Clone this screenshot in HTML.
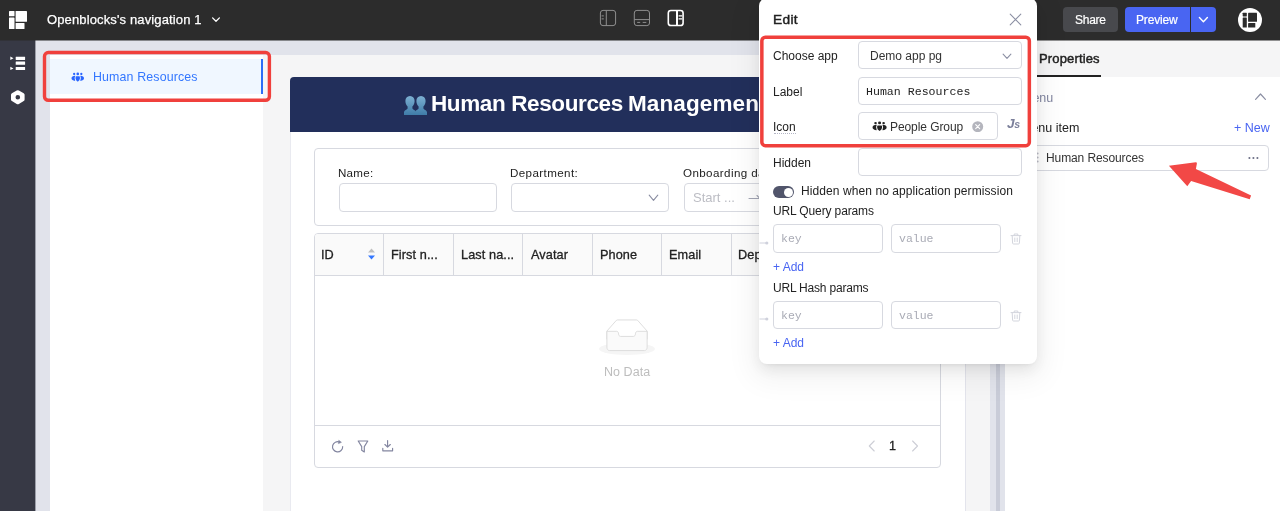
<!DOCTYPE html>
<html>
<head>
<meta charset="utf-8">
<title>Openblocks navigation</title>
<style>
*{box-sizing:border-box;margin:0;padding:0}
html,body{width:1280px;height:511px;overflow:hidden;background:#e1e3eb;font-family:"Liberation Sans",sans-serif;color:#333}
.abs{position:absolute}
.t{position:absolute;white-space:nowrap;line-height:1;will-change:transform}
#topbar{position:absolute;left:0;top:0;width:1280px;height:40px;background:#2c2c2c}
#sidebar{position:absolute;left:0;top:40px;width:35px;height:471px;background:#373945}
#navpanel{position:absolute;left:50px;top:55px;width:213px;height:456px;background:#fff}
#navitem{position:absolute;left:0;top:3.6px;width:214px;height:35.5px;background:#f0f7ff;border-right:3px solid #2e6df6}
#content{position:absolute;left:263px;top:55px;width:727px;height:456px;background:#f5f5f6}
#app{position:absolute;left:290px;top:77px;width:676px;height:434px;background:#fff;border-right:1px solid #e3e4ec;box-shadow:inset 1px 0 0 #e9eaf0;border-radius:4px 4px 0 0;overflow:hidden}
#apphead{position:absolute;left:0;top:0;width:676px;height:55px;background:#222f5b}
#rightpanel{position:absolute;left:1005px;top:40px;width:275px;height:471px;background:#fff}
#scrollthumb{position:absolute;left:995.5px;top:55px;width:4.5px;height:456px;background:#c9ccd8}
.box{position:absolute;border:1px solid #d7d9e0;border-radius:4px;background:#fff}
#popup{position:absolute;left:759px;top:-2px;width:278px;height:366px;background:#fff;border-radius:8px;box-shadow:0 3px 6px -4px rgba(0,0,0,.12),0 6px 16px rgba(0,0,0,.08),0 9px 28px 8px rgba(0,0,0,.05)}
.th{top:14.9px;font-size:12.7px;color:#222;letter-spacing:.1px;-webkit-text-stroke:.3px #222}
.pl{left:14.3px;font-size:12px;color:#222}
.ph{font-size:11.5px;color:#a9abb5}
.mono{font-family:"Liberation Mono",monospace}
</style>
</head>
<body>
<div id="topbar">
<svg class="abs" style="left:9px;top:10.7px" width="18" height="18" viewBox="0 0 18 18"><g fill="#fff"><rect x="0" y="0" width="5.5" height="5.3" rx=".6"/><rect x="6.6" y="0" width="11.4" height="10.8" rx=".6"/><rect x="0" y="6.4" width="5.5" height="11.6" rx=".6"/><rect x="6.6" y="12" width="8.9" height="6" rx=".6"/></g></svg>
<div class="t" style="left:46.5px;top:13px;font-size:13px;color:#fff;letter-spacing:.13px;-webkit-text-stroke:.25px #fff">Openblocks's navigation 1</div>
<svg class="abs" style="left:211px;top:16px" width="10" height="8" viewBox="0 0 10 8"><path d="M1.6 1.9 L5 5.3 L8.4 1.9" fill="none" stroke="#fff" stroke-width="1.3" stroke-linecap="round" stroke-linejoin="round"/></svg>
<svg class="abs" style="left:599px;top:9px" width="18" height="18" viewBox="0 0 18 18"><g fill="none" stroke="#8f8f8f" stroke-width="1"><rect x="1.4" y="1.4" width="15.2" height="15.2" rx="2.6"/><path d="M7.3 1.4V16.6M2.6 6.9h2.2M2.6 9.9h2.2"/></g></svg>
<svg class="abs" style="left:633px;top:9px" width="18" height="18" viewBox="0 0 18 18"><g fill="none" stroke="#8f8f8f" stroke-width="1"><rect x="1.3" y="1.4" width="15.2" height="15.2" rx="2.6"/><path d="M1.3 10.6H16.5M4.2 13.4h3M9.7 13.4h3.6"/></g></svg>
<svg class="abs" style="left:666px;top:9px" width="20" height="18" viewBox="0 0 20 18"><g fill="none" stroke="#fff"><rect x="2.3" y="1.5" width="14.8" height="15" rx="2.6" stroke-width="1.6"/><path d="M11 1.5V16.5" stroke-width="2"/><path d="M12.6 6.9h3.6M12.6 9.9h3.6" stroke-width="1.3"/></g></svg>
<div class="abs" style="left:1063px;top:7px;width:54.5px;height:25px;border-radius:4px;background:#48494d"></div>
<div class="t" style="left:1074.5px;top:14px;font-size:12px;color:#fff;letter-spacing:-.25px;-webkit-text-stroke:.2px #fff">Share</div>
<div class="abs" style="left:1124.5px;top:7px;width:65.5px;height:25px;border-radius:4px 0 0 4px;background:#4965f2"></div>
<div class="abs" style="left:1191px;top:7px;width:24.7px;height:25px;border-radius:0 4px 4px 0;background:#4965f2"></div>
<div class="t" style="left:1135.8px;top:14px;font-size:12px;color:#fff;letter-spacing:-.15px;-webkit-text-stroke:.2px #fff">Preview</div>
<svg class="abs" style="left:1198px;top:16px" width="11" height="8" viewBox="0 0 11 8"><path d="M1.4 1.6 L5.4 5.7 L9.4 1.6" fill="none" stroke="#fff" stroke-width="1.4" stroke-linecap="round" stroke-linejoin="round"/></svg>
<svg class="abs" style="left:1237.6px;top:7.7px" width="24" height="24" viewBox="0 0 24 24"><circle cx="12" cy="12" r="12" fill="#fff"/><g fill="#2c2c2c"><rect x="4.7" y="4.8" width="4.1" height="3.6" rx=".4"/><rect x="10.1" y="4.8" width="8.9" height="9" rx=".4"/><rect x="4.7" y="9.6" width="4.1" height="10" rx=".4"/><rect x="10.1" y="15.1" width="7.2" height="4.5" rx=".4"/></g></svg>
</div>
<div id="sidebar">
<svg class="abs" style="left:10px;top:16px" width="16" height="15" viewBox="0 0 16 15"><g fill="#fff"><rect x="5.7" y=".8" width="9.4" height="3.1" rx=".3"/><rect x="5.7" y="5.6" width="9.4" height="3.1" rx=".3"/><rect x="5.7" y="11" width="9.4" height="3.1" rx=".3"/><path d="M.3 .6 L3.5 2.3 L.3 4Z"/><path d="M.3 10.7 L3.5 12.4 L.3 14.1Z"/></g></svg>
<svg class="abs" style="left:10px;top:49px" width="16" height="16" viewBox="0 0 16 16"><path fill="#fff" fill-rule="evenodd" d="M8.9 1.5 L13.7 4.3 Q14.6 4.8 14.6 5.8 V10.6 Q14.6 11.6 13.7 12.1 L8.9 14.9 Q7.8 15.5 6.7 14.9 L1.9 12.1 Q1 11.6 1 10.6 V5.8 Q1 4.8 1.9 4.3 L6.7 1.5 Q7.8 .9 8.9 1.5Z M7.8 5.9 A2.3 2.3 0 1 0 7.8 10.5 A2.3 2.3 0 1 0 7.8 5.9Z"/></svg>
</div>
<div class="abs" style="left:35px;top:40px;width:1px;height:471px;background:rgba(55,57,69,.4)"></div>
<div id="navpanel"><div id="navitem"></div>
<svg class="abs" style="left:20.6px;top:16.5px" width="13.4" height="10.5" viewBox="70.5 71 14 11"><g fill="#2a66ff"><circle cx="73.8" cy="73.1" r="1.2"/><circle cx="77.55" cy="73" r="1.4"/><circle cx="81.3" cy="73.1" r="1.2"/><path d="M75.3 76.2 Q75.3 75.5 76 75.5 H79.1 Q79.8 75.5 79.8 76.2 V77.9 Q79.8 79.7 77.55 81.2 Q75.3 79.7 75.3 77.9Z"/><path d="M74.9 74.9 Q71 75 71 77.5 Q71 79.8 74.9 80.3 Q73.5 77.6 74.9 74.9Z"/><path d="M80.2 74.9 Q84.1 75 84.1 77.5 Q84.1 79.8 80.2 80.3 Q81.6 77.6 80.2 74.9Z"/></g></svg>
<div class="t" style="left:42.6px;top:16.2px;font-size:12.4px;color:#3377ff;letter-spacing:.14px">Human Resources</div>
</div>
<div id="content"></div>
<div id="app"><div id="apphead"></div>
<svg class="abs" style="left:113.5px;top:18.5px" width="23" height="19" viewBox="0 0 23 19"><defs><linearGradient id="eg" x1="0" y1="0" x2="0" y2="1"><stop offset="0" stop-color="#7db0d2"/><stop offset="1" stop-color="#3f7ca8"/></linearGradient></defs><g fill="url(#eg)"><path d="M6 0 C9 0 10.6 2.2 10.6 5 C10.6 7.4 9.6 9.4 8.4 10.6 L8.4 12.2 C8.4 13.4 11.6 14.2 12 16 L12 19 L0 19 L0 16 C.4 14.2 3.6 13.4 3.6 12.2 L3.6 10.6 C2.4 9.4 1.4 7.4 1.4 5 C1.4 2.2 3 0 6 0Z"/><path d="M17 0 C20 0 21.6 2.2 21.6 5 C21.6 7.4 20.6 9.4 19.4 10.6 L19.4 12.2 C19.4 13.4 22.6 14.2 23 16 L23 19 L11 19 L11 16 C11.4 14.2 14.6 13.4 14.6 12.2 L14.6 10.6 C13.4 9.4 12.4 7.4 12.4 5 C12.4 2.2 14 0 17 0Z"/></g></svg>
<div class="t" style="left:141px;top:16px;font-size:22.5px;font-weight:700;color:#fff;letter-spacing:-.38px">Human Resources</div>
<div class="t" style="left:337.6px;top:16px;font-size:22.5px;font-weight:700;color:#fff;letter-spacing:.12px">Management</div>
<!-- form -->
<div class="box" style="left:24px;top:71px;width:627px;height:78px"></div>
<div class="t" style="left:48px;top:90px;font-size:11.6px;color:#222;letter-spacing:.25px">Name:</div>
<div class="box" style="left:49px;top:106px;width:158px;height:29px"></div>
<div class="t" style="left:220px;top:90px;font-size:11.6px;color:#222;letter-spacing:.4px">Department:</div>
<div class="box" style="left:221px;top:106px;width:158px;height:29px"></div>
<svg class="abs" style="left:358px;top:116.5px" width="11" height="8" viewBox="0 0 11 8"><path d="M1.2 1.2 L5.5 6.3 L9.8 1.2" fill="none" stroke="#8b8fa3" stroke-width="1.1" stroke-linecap="round" stroke-linejoin="round"/></svg>
<div class="t" style="left:393.4px;top:90px;font-size:11.6px;color:#222;letter-spacing:.4px">Onboarding date:</div>
<div class="box" style="left:394px;top:106px;width:240px;height:29px"></div>
<div class="t" style="left:403.3px;top:114px;font-size:13px;color:#bcbdc4">Start ...</div>
<svg class="abs" style="left:458px;top:116px" width="14" height="8" viewBox="0 0 14 8"><path d="M1 5.5 H12 M9 2.5 L12 5.5" fill="none" stroke="#a3a6b5" stroke-width="1.1" stroke-linecap="round"/></svg>
<!-- table -->
<div class="box" style="left:24px;top:156px;width:627px;height:235px;overflow:hidden"><div class="abs" style="left:0;top:0;width:627px;height:42px;background:#fafafa;border-bottom:1px solid #d7d9e0"></div>
<div class="abs" style="left:68px;top:0;width:1px;height:42px;background:#d7d9e0"></div>
<div class="abs" style="left:137.5px;top:0;width:1px;height:42px;background:#d7d9e0"></div>
<div class="abs" style="left:207px;top:0;width:1px;height:42px;background:#d7d9e0"></div>
<div class="abs" style="left:276.5px;top:0;width:1px;height:42px;background:#d7d9e0"></div>
<div class="abs" style="left:346px;top:0;width:1px;height:42px;background:#d7d9e0"></div>
<div class="abs" style="left:415.5px;top:0;width:1px;height:42px;background:#d7d9e0"></div>
<div class="abs" style="left:0;top:191px;width:627px;height:1px;background:#d7d9e0"></div>
<div class="t th" style="left:6.4px">ID</div>
<svg class="abs" style="left:52.1px;top:14px" width="9" height="13" viewBox="0 0 9 13"><path d="M4.5 .6 L8 4.4 H1Z" fill="#bfbfbf"/><path d="M4.5 11.6 L8 7.6 H1Z" fill="#3377ff"/></svg>
<div class="t th" style="left:75.5px">First n...</div>
<div class="t th" style="left:145.8px">Last na...</div>
<div class="t th" style="left:215.6px">Avatar</div>
<div class="t th" style="left:284.5px">Phone</div>
<div class="t th" style="left:354.2px">Email</div>
<div class="t th" style="left:423.4px">Department</div>
<svg class="abs" style="left:284px;top:85.2px" width="56" height="36" viewBox="0 0 64 41"><g transform="translate(0 1)" fill="none" fill-rule="evenodd"><ellipse fill="#f5f5f5" cx="32" cy="33" rx="32" ry="7"/><g fill-rule="nonzero" stroke="#d9d9d9"><path d="M55 12.76L44.854 1.258C44.367.474 43.656 0 42.907 0H21.093c-.749 0-1.46.474-1.947 1.257L9 12.761V22h46v-9.24z"/><path d="M41.613 15.931c0-1.605.994-2.93 2.227-2.931H55v18.137C55 33.26 53.68 35 52.05 35h-40.1C10.32 35 9 33.259 9 31.137V13h11.16c1.233 0 2.227 1.323 2.227 2.928v.022c0 1.605 1.005 2.901 2.237 2.901h14.752c1.232 0 2.237-1.308 2.237-2.913v-.007z" fill="#fafafa"/></g></g></svg>
<div class="t" style="left:288.8px;top:132px;font-size:12.5px;color:#bdbdbd;letter-spacing:.05px">No Data</div>
<svg class="abs" style="left:15px;top:205px" width="80" height="20" viewBox="330 439 80 20"><g fill="none" stroke="#8386a0" stroke-width="1.15" stroke-linecap="round" stroke-linejoin="round"><path d="M342.7 446.6 A5.1 5.1 0 1 1 339.6 442.1"/><path d="M339 440.5 L341.4 442.3 L338.7 443.5Z" fill="#8386a0" stroke-width=".6"/><path d="M358.2 441 H367.8 L364.3 446.6 V452 L361.7 450.2 V446.6Z"/><path d="M387.6 440.6 V447 M384.9 444.5 L387.6 447.2 L390.3 444.5 M382.8 448.3 V450.8 H392.6 V448.3"/></g></svg>
<svg class="abs" style="left:552px;top:205.2px" width="10" height="14" viewBox="0 0 10 14"><path d="M7.2 2 L2.3 7 L7.2 12" fill="none" stroke="#cdced6" stroke-width="1.1" stroke-linecap="round" stroke-linejoin="round"/></svg>
<div class="t" style="left:574.4px;top:205.7px;font-size:12.6px;color:#222;-webkit-text-stroke:.3px #222">1</div>
<svg class="abs" style="left:595px;top:205.2px" width="10" height="14" viewBox="0 0 10 14"><path d="M2.6 2 L7.5 7 L2.6 12" fill="none" stroke="#cdced6" stroke-width="1.1" stroke-linecap="round" stroke-linejoin="round"/></svg>
</div>
</div>
<div id="scrollthumb"></div>
<div id="rightpanel">
<div class="abs" style="left:0;top:0;width:275px;height:37px;background:#f5f5f6"></div>
<div class="t" style="left:33.8px;top:12.2px;font-size:13px;color:#222;letter-spacing:.15px;-webkit-text-stroke:.45px #222">Properties</div>
<div class="abs" style="left:18px;top:34.5px;width:77.5px;height:2px;background:#222"></div>
<div class="t" style="left:16.8px;top:51.7px;font-size:12.5px;color:#8286a0">Menu</div>
<svg class="abs" style="left:249px;top:52px" width="13" height="9" viewBox="0 0 13 9"><path d="M1.6 7.4 L6.5 2 L11.4 7.4" fill="none" stroke="#8b8fa3" stroke-width="1.2" stroke-linecap="round" stroke-linejoin="round"/></svg>
<div class="t" style="left:16px;top:82.2px;font-size:12.5px;color:#222">Menu item</div>
<div class="t" style="left:229px;top:81.5px;font-size:12.5px;color:#4965f2">+ New</div>
<div class="box" style="left:16px;top:104.5px;width:248px;height:26px"></div>
<svg class="abs" style="left:28px;top:112px" width="6" height="11" viewBox="0 0 6 11"><g fill="#b8b9c4"><circle cx="1.2" cy="1.5" r="1"/><circle cx="4.6" cy="1.5" r="1"/><circle cx="1.2" cy="5.5" r="1"/><circle cx="4.6" cy="5.5" r="1"/><circle cx="1.2" cy="9.5" r="1"/><circle cx="4.6" cy="9.5" r="1"/></g></svg>
<div class="t" style="left:40.7px;top:111.5px;font-size:12px;color:#333;letter-spacing:-.1px">Human Resources</div>
<svg class="abs" style="left:243px;top:115.5px" width="12" height="4" viewBox="0 0 12 4"><g fill="#6b6e85"><circle cx="1.4" cy="2" r="1.05"/><circle cx="5.4" cy="2" r="1.05"/><circle cx="9.4" cy="2" r="1.05"/></g></svg>
<svg class="abs" style="left:160px;top:118px" width="92" height="46" viewBox="1165 158 92 46"><path d="M1168.9 165.8 L1195.8 162.2 Q1197 162.2 1196.9 163.6 L1195.9 169 L1251.1 195.5 L1249.7 199.2 L1191.1 181.1 L1187.3 186.3Z" fill="#f24846"/></svg>
</div>
<div class="abs" style="left:0;top:40px;width:1280px;height:1px;background:rgba(44,44,44,.5)"></div>
<div id="popup">
<div class="t" style="left:13.6px;top:15px;font-size:13.7px;color:#222;letter-spacing:.35px;-webkit-text-stroke:.45px #222">Edit</div>
<svg class="abs" style="left:250px;top:15px" width="13" height="13" viewBox="0 0 13 13"><path d="M1.2 1.2 L11.8 11.8 M11.8 1.2 L1.2 11.8" fill="none" stroke="#8b8fa3" stroke-width="1.1" stroke-linecap="round"/></svg>
<div class="t pl" style="top:52.2px">Choose app</div>
<div class="box" style="left:99px;top:43px;width:164px;height:28px"></div>
<div class="t" style="left:111.3px;top:52.2px;font-size:12px;color:#333">Demo app pg</div>
<svg class="abs" style="left:243px;top:54.5px" width="10" height="7" viewBox="0 0 10 7"><path d="M1.1 1.2 L5 5.4 L8.9 1.2" fill="none" stroke="#8b8fa3" stroke-width="1.1" stroke-linecap="round" stroke-linejoin="round"/></svg>
<div class="t pl" style="top:87.6px">Label</div>
<div class="box" style="left:99px;top:79px;width:164px;height:28px"></div>
<div class="t mono" style="left:107.4px;top:88.2px;font-size:11.6px;color:#222">Human Resources</div>
<div class="t pl" style="top:122.6px">Icon</div>
<div class="abs" style="left:14.5px;top:134.5px;width:22.5px;height:0;border-top:1px dotted #b4b6c6"></div>
<div class="box" style="left:99px;top:114px;width:139.5px;height:28px"></div>
<svg class="abs" style="left:113.1px;top:123.2px" width="15.07" height="10.8" viewBox="70.5 71 14 11" preserveAspectRatio="none"><g fill="#222"><circle cx="73.8" cy="73.1" r="1.2"/><circle cx="77.55" cy="73" r="1.4"/><circle cx="81.3" cy="73.1" r="1.2"/><path d="M75.3 76.2 Q75.3 75.5 76 75.5 H79.1 Q79.8 75.5 79.8 76.2 V77.9 Q79.8 79.7 77.55 81.2 Q75.3 79.7 75.3 77.9Z"/><path d="M74.9 74.9 Q71 75 71 77.5 Q71 79.8 74.9 80.3 Q73.5 77.6 74.9 74.9Z"/><path d="M80.2 74.9 Q84.1 75 84.1 77.5 Q84.1 79.8 80.2 80.3 Q81.6 77.6 80.2 74.9Z"/></g></svg>
<div class="t" style="left:130.6px;top:123px;font-size:12px;color:#333;letter-spacing:-.08px">People Group</div>
<svg class="abs" style="left:213.3px;top:122.6px" width="11.4" height="11.4" viewBox="0 0 12 12"><circle cx="6" cy="6" r="5.8" fill="#b4b5bd"/><path d="M3.9 3.9 L8.1 8.1 M8.1 3.9 L3.9 8.1" stroke="#fff" stroke-width="1.2" stroke-linecap="round"/></svg>
<div class="t" style="left:248px;top:119.4px;font-size:13.6px;font-style:italic;font-weight:700;color:#7c809b;letter-spacing:-.4px">J<span style="font-size:10.6px">s</span></div>
<div class="t pl" style="top:158.6px">Hidden</div>
<div class="box" style="left:99px;top:150px;width:164px;height:28px"></div>
<div class="abs" style="left:13.8px;top:188px;width:21.4px;height:12.3px;border-radius:7px;background:#51556b"></div>
<div class="abs" style="left:24.6px;top:189.6px;width:9.2px;height:9.2px;border-radius:5px;background:#fff"></div>
<div class="t" style="left:41.9px;top:186.8px;font-size:12px;color:#222;letter-spacing:.085px">Hidden when no application permission</div>
<div class="t pl" style="top:207.3px;letter-spacing:-.13px">URL Query params</div>
<div class="box" style="left:14px;top:226px;width:110px;height:29px"></div>
<div class="box" style="left:131.5px;top:226px;width:110.5px;height:29px"></div>
<div class="t mono ph" style="left:22px;top:235.4px">key</div>
<div class="t mono ph" style="left:140px;top:235.4px">value</div>
<div class="t pl" style="top:262.5px;color:#4965f2">+ Add</div>
<div class="t pl" style="top:284.2px;letter-spacing:-.2px">URL Hash params</div>
<div class="box" style="left:14px;top:303px;width:110px;height:28px"></div>
<div class="box" style="left:131.5px;top:303px;width:110.5px;height:28px"></div>
<div class="t mono ph" style="left:22px;top:312.2px">key</div>
<div class="t mono ph" style="left:140px;top:312.2px">value</div>
<div class="t pl" style="top:339.2px;color:#4965f2">+ Add</div>
<svg class="abs tr" style="left:250.5px;top:235px" width="12" height="12" viewBox="0 0 12 12"><g fill="none" stroke="#d3d5dd" stroke-width="1" stroke-linecap="round" stroke-linejoin="round"><path d="M1 2.6 H11 M4.2 2.4 V1 H7.8 V2.4 M2.2 2.8 L2.6 10.2 Q2.7 11 3.5 11 H8.5 Q9.3 11 9.4 10.2 L9.8 2.8 M4.8 5 V8.6 M7.2 5 V8.6"/></g></svg>
<svg class="abs tr" style="left:250.5px;top:311.6px" width="12" height="12" viewBox="0 0 12 12"><g fill="none" stroke="#d3d5dd" stroke-width="1" stroke-linecap="round" stroke-linejoin="round"><path d="M1 2.6 H11 M4.2 2.4 V1 H7.8 V2.4 M2.2 2.8 L2.6 10.2 Q2.7 11 3.5 11 H8.5 Q9.3 11 9.4 10.2 L9.8 2.8 M4.8 5 V8.6 M7.2 5 V8.6"/></g></svg>
<svg class="abs" style="left:0px;top:241.8px" width="10" height="6" viewBox="0 0 10 6"><path d="M.5 3 H7" stroke="#cfd1dc" stroke-width="1"/><circle cx="7.8" cy="3" r="1.6" fill="#cfd1dc"/></svg>
<svg class="abs" style="left:0px;top:318px" width="10" height="6" viewBox="0 0 10 6"><path d="M.5 3 H7" stroke="#cfd1dc" stroke-width="1"/><circle cx="7.8" cy="3" r="1.6" fill="#cfd1dc"/></svg>
</div>
<svg class="abs" style="left:756px;top:32px" width="280" height="120" viewBox="756 32 280 120"><rect x="761.85" y="37.15" width="267.5" height="108.5" rx="3.5" fill="none" stroke="#f0403c" stroke-width="3.5"/></svg>
<svg class="abs" style="left:40px;top:48px" width="236" height="58" viewBox="40 48 236 58"><rect x="44.5" y="52.5" width="224.9" height="47.8" rx="3.8" fill="none" stroke="#f0403c" stroke-width="3.4"/></svg>
</body>
</html>
